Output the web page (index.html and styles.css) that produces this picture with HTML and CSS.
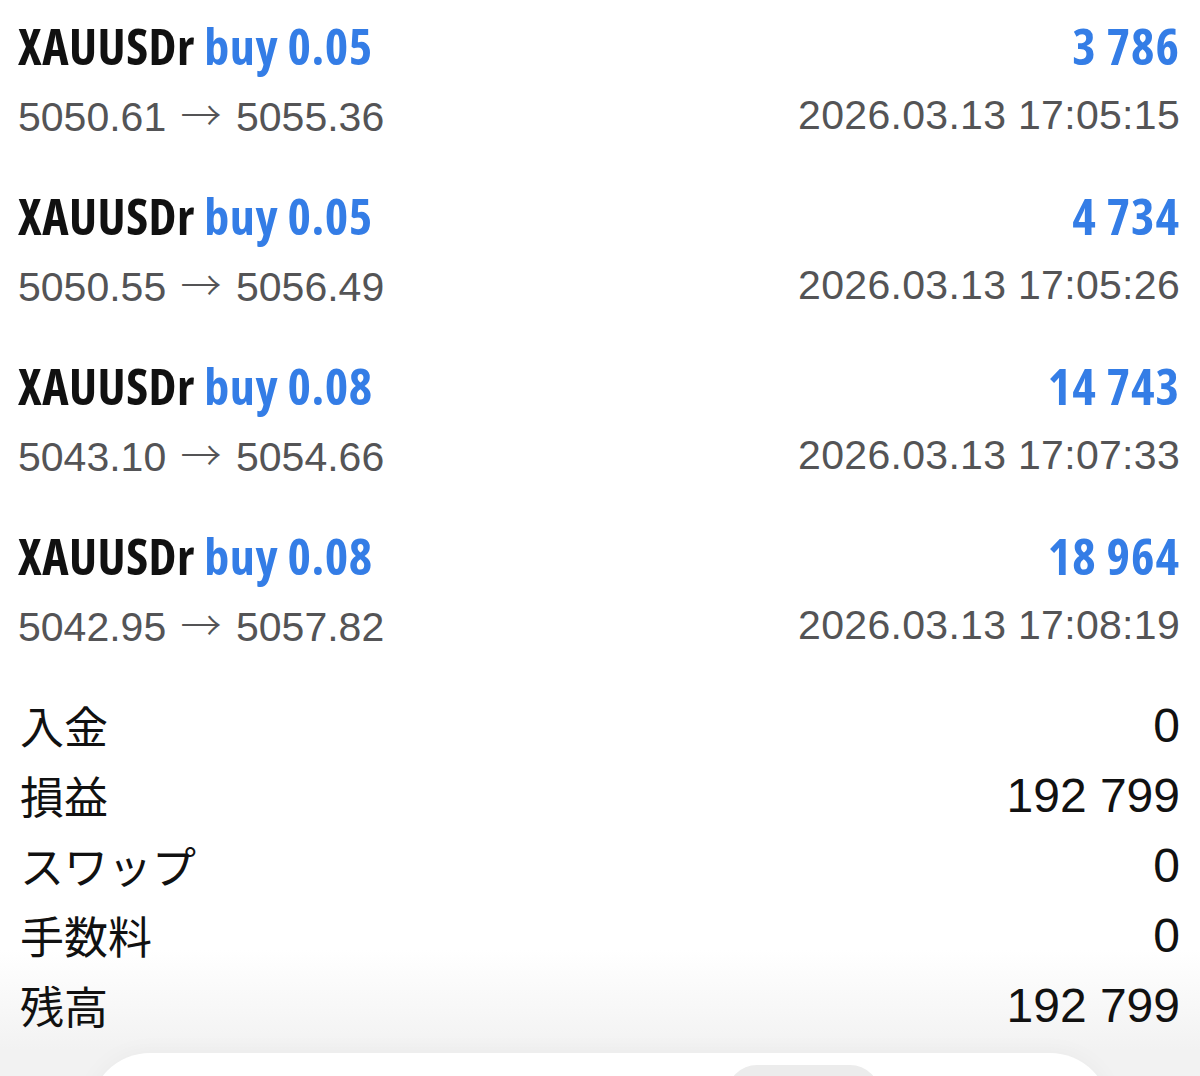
FILE: index.html
```html
<!doctype html>
<html lang="ja">
<head>
  <meta charset="UTF-8" />
  <meta name="viewport" content="width=device-width, initial-scale=1" />
  <title>履歴</title>
  <link rel="stylesheet" href="styles.css">
</head>
<body>
  <div class="deals">
    <div class="deal">
      <div class="line">
        <div class="title">XAUUSDr <span class="side">buy 0.05</span></div>
        <div class="profit">3 786</div>
      </div>
      <div class="line sub">
        <div class="prices">5050.61 <span class="arrow">→</span> 5055.36</div>
        <div class="time">2026.03.13 17:05:15</div>
      </div>
    </div>
    <div class="deal">
      <div class="line">
        <div class="title">XAUUSDr <span class="side">buy 0.05</span></div>
        <div class="profit">4 734</div>
      </div>
      <div class="line sub">
        <div class="prices">5050.55 <span class="arrow">→</span> 5056.49</div>
        <div class="time">2026.03.13 17:05:26</div>
      </div>
    </div>
    <div class="deal">
      <div class="line">
        <div class="title">XAUUSDr <span class="side">buy 0.08</span></div>
        <div class="profit">14 743</div>
      </div>
      <div class="line sub">
        <div class="prices">5043.10 <span class="arrow">→</span> 5054.66</div>
        <div class="time">2026.03.13 17:07:33</div>
      </div>
    </div>
    <div class="deal">
      <div class="line">
        <div class="title">XAUUSDr <span class="side">buy 0.08</span></div>
        <div class="profit">18 964</div>
      </div>
      <div class="line sub">
        <div class="prices">5042.95 <span class="arrow">→</span> 5057.82</div>
        <div class="time">2026.03.13 17:08:19</div>
      </div>
    </div>
  </div>

  <div class="summary">
    <div class="row"><span class="label">入金</span><span class="value">0</span></div>
    <div class="row"><span class="label">損益</span><span class="value">192 799</span></div>
    <div class="row"><span class="label">スワップ</span><span class="value">0</span></div>
    <div class="row"><span class="label">手数料</span><span class="value">0</span></div>
    <div class="row"><span class="label">残高</span><span class="value">192 799</span></div>
  </div>

  <div class="tabbar">
    <div class="tab-active"></div>
  </div>
</body>
</html>
```
FILE: styles.css
```css
html, body {
  height: 100%;
}
body {
  margin: 0;
  padding: 20px 0 0;
  box-sizing: border-box;
  display: flex;
  flex-direction: column;
  overflow: hidden;
  background: linear-gradient(to bottom, #fff 0, #fff 950px, #f2f2f2 1050px);
  font-family: "Liberation Sans", "Noto Sans CJK JP", sans-serif;
  color: #111;
}
.deals {
  display: flex;
  flex-direction: column;
  gap: 40px;
  padding: 0 20px 0 18px;
}
.line {
  display: flex;
  justify-content: space-between;
  align-items: flex-start;
  height: 60px;
}
.line.sub {
  align-items: center;
  height: 70px;
}
.title, .profit {
  font-family: "Open Sans", sans-serif;
  font-stretch: 75%;
  font-weight: bold;
  font-size: 50px;
  line-height: 52px;
  letter-spacing: 0.5px;
}
.profit {
  letter-spacing: 1px;
}
.side, .profit {
  color: #347de6;
}
.prices, .time {
  font-size: 41px;
  color: #545456;
  line-height: 70px;
}
.time {
  letter-spacing: 0.3px;
}
.arrow {
  font-family: "Noto Sans CJK JP", sans-serif;
  font-weight: 300;
  display: inline-block;
  margin: 0 3px;
}
.summary {
  margin-top: 30px;
  padding: 0 20px 0 20px;
}
.row {
  display: flex;
  justify-content: space-between;
  align-items: center;
  height: 70px;
}
.label {
  font-size: 44px;
}
.value {
  font-size: 48px;
}
.tabbar {
  flex: 1;
  margin: 13px 90px 0;
  background: #fff;
  border-radius: 60px 60px 0 0;
  box-shadow: 0 0 24px rgba(0, 0, 0, 0.04);
  display: flex;
  padding: 12px 0 0 637px;
}
.tab-active {
  width: 153px;
  height: 60px;
  background: #ececec;
  border-radius: 40px;
}
```
